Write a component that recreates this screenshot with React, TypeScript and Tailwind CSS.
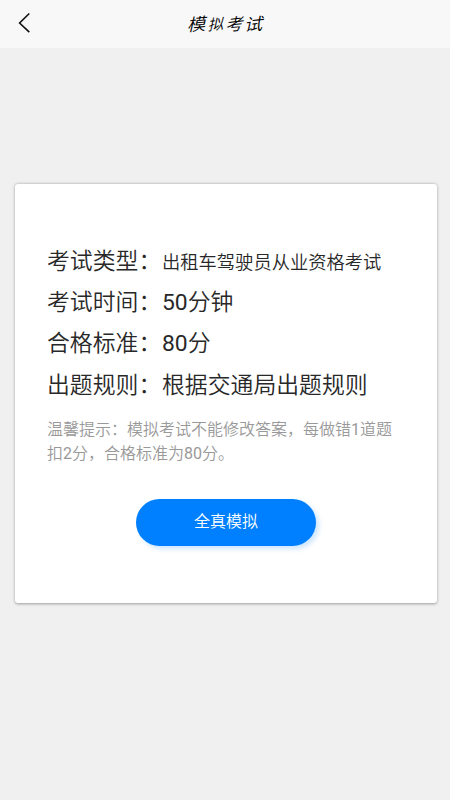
import type { ReactNode } from "react";

function Num({ children }: { children: ReactNode }) {
  return <span className="font-normal">{children}</span>;
}

const rows: { label: string; value: ReactNode; small: boolean }[] = [
  { label: "考试类型：", value: "出租车驾驶员从业资格考试", small: true },
  { label: "考试时间：", value: <><Num>50</Num>分钟</>, small: false },
  { label: "合格标准：", value: <><Num>80</Num>分</>, small: false },
  { label: "出题规则：", value: "根据交通局出题规则", small: false },
];

export default function App() {
  return (
    <div className="flex h-[800px] w-[450px] flex-col overflow-hidden bg-[#f0f0f0] font-[Roboto,'Noto_Sans_CJK_SC',sans-serif] text-[#282828]">
      <header className="grid h-12 shrink-0 grid-cols-[48px_1fr_48px] items-center bg-[#f8f8f8]">
        <button aria-label="返回" className="flex h-12 items-start pt-3 pl-[18px]">
          <svg width="13" height="22" viewBox="0 0 13 22" fill="none" stroke="#111" strokeWidth="1.6">
            <path d="M11.3 1.5L1.6 11L11.3 20.2" />
          </svg>
        </button>
        <h1 className="flex justify-center pl-0.5 text-[19px] leading-none font-[350] text-black">
          <span className="inline-block -skew-x-12 -skew-y-6 scale-x-95 scale-y-90">模</span>
          <span className="inline-block -skew-x-12 -skew-y-6 scale-80">拟</span>
          <span className="inline-block -skew-x-12 -skew-y-6 scale-90">考</span>
          <span className="inline-block -skew-x-12 -skew-y-6 scale-x-95 scale-y-90">试</span>
        </h1>
      </header>
      <main className="mt-[136px] ml-[15px] flex h-[418.5px] w-[422px] shrink-0 flex-col rounded-[3px] bg-white px-8 pt-[57.5px] shadow-[0_0.5px_3px_rgba(0,0,0,0.35)]">
        {rows.map((r) => (
          <div key={r.label} className="flex h-[41.2px] shrink-0 items-center whitespace-nowrap text-[22.85px] font-[350]">
            <span className="w-[115px] shrink-0">{r.label}</span>
            <span className={r.small ? "pt-px text-[18.3px]" : ""}>{r.value}</span>
          </div>
        ))}
        <p className="mt-[12px] text-[16px] leading-6 font-[350] whitespace-nowrap text-[#999]">
          温馨提示：模拟考试不能修改答案，每做错<Num>1</Num>道题
          <br />
          扣<Num>2</Num>分，合格标准为<Num>80</Num>分。
        </p>
        <button className="mt-[33px] ml-[89px] h-[46.5px] w-[180px] shrink-0 rounded-full bg-[#0080ff] pb-0.5 text-[16px] font-[350] text-white shadow-[3px_3px_5px_rgba(0,128,255,0.2)]">
          全真模拟
        </button>
      </main>
    </div>
  );
}
